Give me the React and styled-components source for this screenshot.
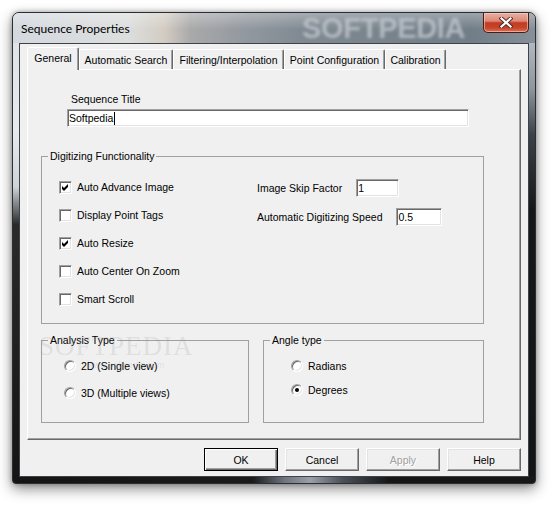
import React from "react";
import styled, { createGlobalStyle } from "styled-components";

const GlobalStyle = createGlobalStyle`
  html, body {
    margin: 0;
    padding: 0;
    background: #fff;
  }
  body {
    font-family: "Liberation Sans", Arial, sans-serif;
    font-size: 10.5px;
    color: #000;
  }
  #root {
    width: 556px;
    height: 505px;
    overflow: hidden;
  }
`;

const Window = styled.div`
  box-sizing: border-box;
  width: 524px;
  height: 472px;
  margin: 12px 0 0 12px;
  padding: 0 6px 6px;
  border: 1px solid #2b2f33;
  border-radius: 7px 7px 4px 4px;
  background:
    linear-gradient(to right, #141414 0%, #1b1b1b 46%, #6f757c 52%, #9aa0a6 57%, #4c5258 63%, #161616 72%) left bottom / 100% 7px no-repeat,
    linear-gradient(to bottom, #dce1e6 0%, #e8ebee 25%, #cfd4d9 37%, #2a2a2a 45%, #141414 100%) left top / 7px 100% no-repeat,
    linear-gradient(to bottom, #c9ced4 0%, #8e969e 16%, #3a4148 26%, #171717 42%, #141414 100%) right top / 7px 100% no-repeat,
    #1a1a1a;
  box-shadow: 0 5px 14px rgba(0, 0, 0, 0.45), 0 0 5px rgba(0, 0, 0, 0.3);
`;

const TitleBar = styled.div`
  position: relative;
  display: flex;
  align-items: flex-start;
  height: 30px;
  margin: 0 -6px;
  padding: 0 6px;
  border-radius: 6px 6px 0 0;
  overflow: hidden;
  background:
    linear-gradient(to bottom, rgba(255, 255, 255, 0.3), rgba(255, 255, 255, 0) 55%),
    linear-gradient(to right, #d4d9df 0%, #dcdedd 22%, #d3ccc3 29%, #aaa9aa 34%, #9399a0 44%, #7f8991 56%, #717d87 88%, #86909a 100%);
`;

const Title = styled.div`
  padding: 8px 0 0 2px;
  font-family: "Lato", "Open Sans", sans-serif;
  font-size: 12px;
  line-height: 15px;
  color: #000;
`;

const TitleWatermark = styled.div`
  position: absolute;
  left: 289px;
  top: 2px;
  font-family: "Liberation Sans", Arial, sans-serif;
  font-weight: bold;
  font-size: 29px;
  line-height: 27px;
  letter-spacing: -0.3px;
  color: rgba(196, 202, 208, 0.75);
  filter: blur(1.4px);
`;

const CloseButton = styled.div`
  position: relative;
  z-index: 1;
  box-sizing: border-box;
  width: 46px;
  height: 20px;
  margin-left: auto;
  display: flex;
  align-items: center;
  justify-content: center;
  border: 1px solid #4b1c14;
  border-top: none;
  border-radius: 0 0 5px 5px;
  background: linear-gradient(to bottom, #eab0a2 0%, #dc8a76 42%, #c33a22 52%, #c6452b 78%, #dd7556 100%);
  box-shadow: inset 0 0 0 1px rgba(255, 214, 200, 0.55);
`;

const Client = styled.div`
  box-sizing: border-box;
  height: 434px;
  display: flex;
  flex-direction: column;
  padding: 3px 7px 5px;
  border: 1px solid #3d4348;
  background: #f0f0f0;
`;

const TabRow = styled.div`
  display: flex;
  align-items: flex-end;
  height: 22px;
`;

const Tab = styled.div`
  position: relative;
  z-index: ${(p) => (p.$active ? 2 : 1)};
  box-sizing: border-box;
  width: ${(p) => p.$w}px;
  height: ${(p) => (p.$active ? 23 : 20)}px;
  margin-bottom: ${(p) => (p.$active ? -1 : 0)}px;
  display: flex;
  align-items: center;
  justify-content: center;
  padding-bottom: ${(p) => (p.$active ? 2 : 0)}px;
  border: 1px solid #fff;
  border-right-color: #696969;
  border-bottom: none;
  border-radius: 2px 2px 0 0;
  box-shadow: inset -1px 0 0 #a0a0a0;
  background: #f0f0f0;
  white-space: nowrap;
`;

const Panel = styled.div`
  position: relative;
  box-sizing: border-box;
  height: 371px;
  padding-left: 13px;
  border: 1px solid #fff;
  border-right-color: #696969;
  border-bottom-color: #696969;
  box-shadow: inset -1px -1px 0 #a0a0a0;
`;

const FieldLabel = styled.div`
  margin: 23px 0 0 30px;
  line-height: 13px;
`;

const TextBox = styled.div`
  box-sizing: border-box;
  width: ${(p) => p.$w}px;
  height: 18px;
  margin-left: ${(p) => p.$ml || 0}px;
  margin-top: ${(p) => p.$mt || 0}px;
  display: flex;
  align-items: center;
  padding-left: 1px;
  border: 1px solid;
  border-color: #a0a0a0 #fff #fff #a0a0a0;
  box-shadow: inset 1px 1px 0 #696969, inset -1px -1px 0 #e3e3e3;
  background: #fff;
  white-space: nowrap;
`;

const Caret = styled.span`
  display: inline-block;
  width: 1px;
  height: 13px;
  margin-left: 1px;
  background: #000;
`;

const Group = styled.fieldset`
  box-sizing: border-box;
  width: ${(p) => p.$w}px;
  height: ${(p) => p.$h}px;
  min-width: 0;
  margin: ${(p) => p.$mt || 0}px 0 0;
  padding: 0;
  border: 1px solid #a0a0a0;
`;

const Legend = styled.legend`
  margin-left: 6px;
  padding: 0 2px;
  line-height: 13px;
`;

const DigitizingGrid = styled.div`
  display: grid;
  grid-template-columns: 198px 1fr;
  padding: 10px 0 0 17px;
`;

const Column = styled.div`
  display: flex;
  flex-direction: column;
`;

const CheckRow = styled.div`
  display: flex;
  align-items: center;
  gap: 5px;
  height: 28px;
`;

const CheckBox = styled.div`
  box-sizing: border-box;
  width: 13px;
  height: 13px;
  border: 1px solid;
  border-color: #a0a0a0 #fff #fff #a0a0a0;
  box-shadow: inset 1px 1px 0 #696969, inset -1px -1px 0 #e3e3e3;
  background: #fff;
`;

const InputRow = styled.div`
  display: flex;
  align-items: center;
  gap: 14px;
  height: 29px;
`;

const BottomRow = styled.div`
  display: flex;
  gap: 14px;
  margin-top: 10px;
`;

const RadioList = styled.div`
  display: flex;
  flex-direction: column;
  padding: 7px 0 0 ${(p) => p.$pl}px;
`;

const RadioRow = styled.div`
  display: flex;
  align-items: center;
  gap: 5px;
  height: 24px;
  margin-top: ${(p) => p.$mt || 0}px;
`;

const RadioCircle = styled.div`
  box-sizing: border-box;
  width: 12px;
  height: 12px;
  display: flex;
  align-items: center;
  justify-content: center;
  border: 1px solid;
  border-color: #a0a0a0 #fff #fff #a0a0a0;
  border-radius: 50%;
  box-shadow: inset 1px 1px 0 #696969, inset -1px -1px 0 #e3e3e3;
  background: #fff;
`;

const RadioDot = styled.div`
  width: 4px;
  height: 4px;
  border-radius: 50%;
  background: #000;
`;

const PanelWatermark = styled.div`
  position: absolute;
  left: 11px;
  top: 262px;
  pointer-events: none;
  color: rgba(150, 150, 150, 0.2);
  font-family: "Liberation Serif", serif;
`;

const WatermarkBig = styled.div`
  font-size: 27px;
  line-height: 28px;
  letter-spacing: 1px;
`;

const WatermarkSmall = styled.div`
  margin: 0 0 0 48px;
  font-family: "Liberation Sans", Arial, sans-serif;
  font-size: 9px;
  line-height: 10px;
`;

const ButtonRow = styled.div`
  display: flex;
  justify-content: flex-end;
  gap: 7px;
  margin-top: 8px;
`;

const Button = styled.button`
  box-sizing: border-box;
  width: 74px;
  height: 23px;
  padding: 0;
  font: inherit;
  color: ${(p) => (p.disabled ? "#a0a0a0" : "#000")};
  text-shadow: ${(p) => (p.disabled ? "1px 1px 0 #fff" : "none")};
  background: #f0f0f0;
  border: 1px solid;
  border-color: ${(p) => (p.$default ? "#000" : "#fff #696969 #696969 #fff")};
  box-shadow: ${(p) =>
    p.$default
      ? "inset 1px 1px 0 #fff, inset -1px -1px 0 #696969, inset -2px -2px 0 #a0a0a0"
      : "inset -1px -1px 0 #a0a0a0, inset 1px 1px 0 #e3e3e3"};
`;

const CloseGlyph = () => (
  <svg width="14" height="11" viewBox="0 0 14 11">
    <path d="M2.5 1.5 L11.5 9.5 M11.5 1.5 L2.5 9.5" stroke="#4a2a24" strokeWidth="4" strokeLinecap="square" />
    <path d="M2.5 1.5 L11.5 9.5 M11.5 1.5 L2.5 9.5" stroke="#fff" strokeWidth="2.2" strokeLinecap="square" />
  </svg>
);

const Check = ({ checked, label }) => (
  <CheckRow>
    <CheckBox>
      {checked && (
        <svg width="11" height="11" viewBox="0 0 11 11">
          <polygon points="2,4 4,6 8,2 8,5 4,9 2,7" fill="#000" />
        </svg>
      )}
    </CheckBox>
    <span>{label}</span>
  </CheckRow>
);

const Radio = ({ checked, label, mt }) => (
  <RadioRow $mt={mt}>
    <RadioCircle>{checked && <RadioDot />}</RadioCircle>
    <span>{label}</span>
  </RadioRow>
);

const tabs = [
  { label: "General", w: 52, active: true },
  { label: "Automatic Search", w: 94 },
  { label: "Filtering/Interpolation", w: 111 },
  { label: "Point Configuration", w: 101 },
  { label: "Calibration", w: 61 },
];

const checks = [
  { label: "Auto Advance Image", checked: true },
  { label: "Display Point Tags" },
  { label: "Auto Resize", checked: true },
  { label: "Auto Center On Zoom" },
  { label: "Smart Scroll" },
];

export default function App() {
  return (
    <>
      <GlobalStyle />
      <Window>
        <TitleBar>
          <Title>Sequence Properties</Title>
          <TitleWatermark>SOFTPEDIA</TitleWatermark>
          <CloseButton>
            <CloseGlyph />
          </CloseButton>
        </TitleBar>
        <Client>
          <TabRow>
            {tabs.map((t) => (
              <Tab key={t.label} $w={t.w} $active={t.active}>
                {t.label}
              </Tab>
            ))}
          </TabRow>
          <Panel>
            <FieldLabel>Sequence Title</FieldLabel>
            <TextBox $w={402} $ml={26} $mt={3}>
              Softpedia
              <Caret />
            </TextBox>

            <Group $w={443} $h={174} $mt={23}>
              <Legend>Digitizing Functionality</Legend>
              <DigitizingGrid>
                <Column>
                  {checks.map((c) => (
                    <Check key={c.label} label={c.label} checked={c.checked} />
                  ))}
                </Column>
                <Column>
                  <InputRow>
                    <span>Image Skip Factor</span>
                    <TextBox $w={43}>1</TextBox>
                  </InputRow>
                  <InputRow>
                    <span>Automatic Digitizing Speed</span>
                    <TextBox $w={46}>0.5</TextBox>
                  </InputRow>
                </Column>
              </DigitizingGrid>
            </Group>

            <BottomRow>
              <Group $w={208} $h={89}>
                <Legend>Analysis Type</Legend>
                <RadioList $pl={22}>
                  <Radio label="2D (Single view)" />
                  <Radio label="3D (Multiple views)" mt={3} />
                </RadioList>
              </Group>
              <Group $w={221} $h={89}>
                <Legend>Angle type</Legend>
                <RadioList $pl={27}>
                  <Radio label="Radians" />
                  <Radio label="Degrees" checked />
                </RadioList>
              </Group>
            </BottomRow>

            <PanelWatermark>
              <WatermarkBig>SOFTPEDIA</WatermarkBig>
              <WatermarkSmall>www.softpedia.com</WatermarkSmall>
            </PanelWatermark>
          </Panel>
          <ButtonRow>
            <Button $default>OK</Button>
            <Button>Cancel</Button>
            <Button disabled>Apply</Button>
            <Button>Help</Button>
          </ButtonRow>
        </Client>
      </Window>
    </>
  );
}
